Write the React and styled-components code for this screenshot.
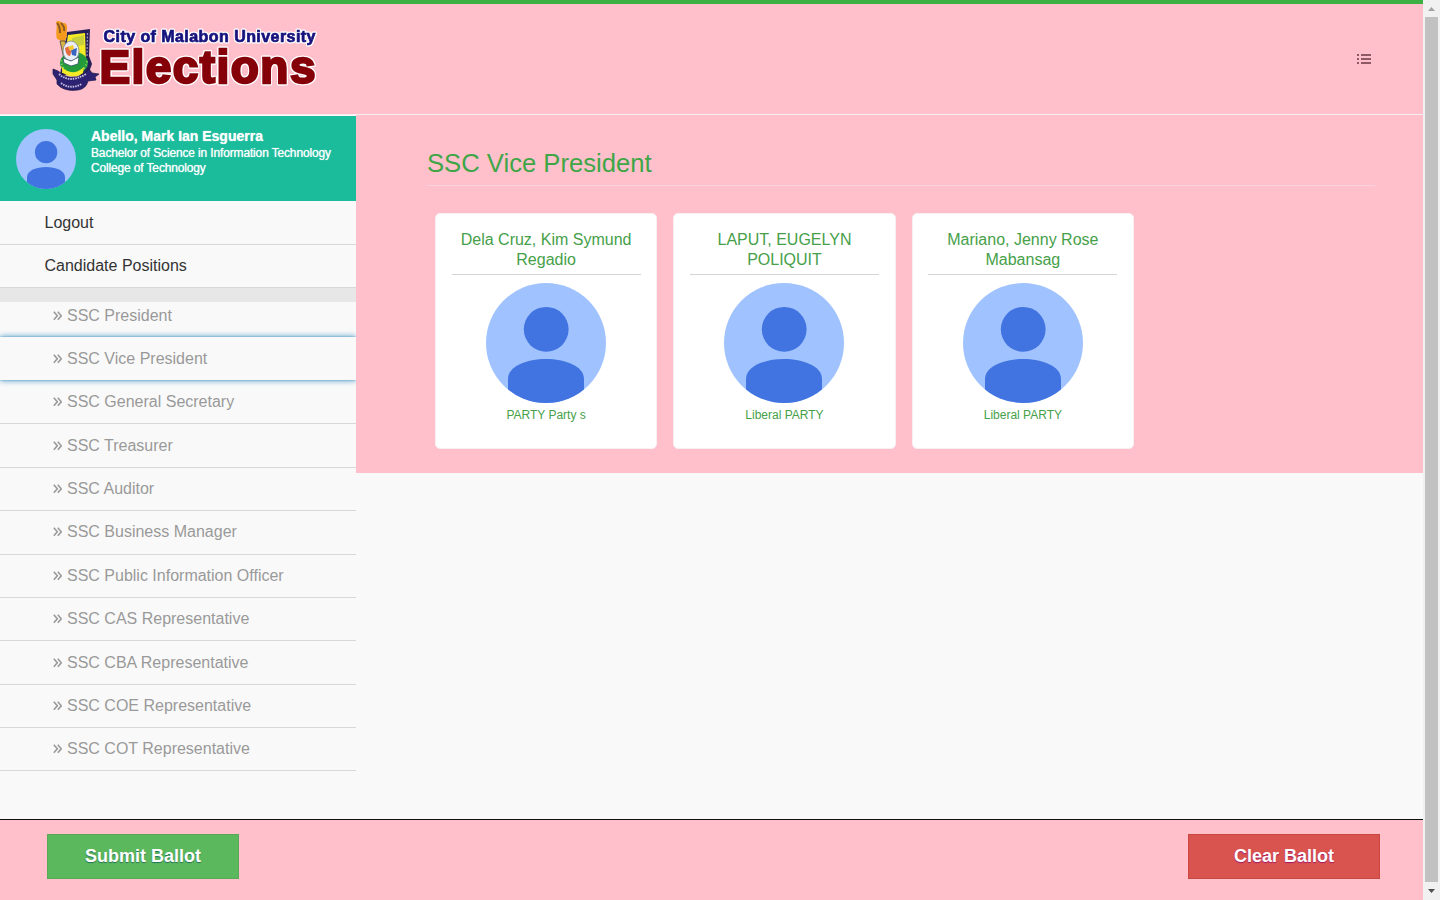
import React from 'react';
import styled, { createGlobalStyle, css } from 'styled-components';

const GlobalStyle = createGlobalStyle`
  *, *::before, *::after { box-sizing: border-box; }
  html, body { margin: 0; padding: 0; overflow: hidden; }
  body {
    font-family: "Liberation Sans", Arial, sans-serif;
    font-size: 16px;
    color: #333;
    background: #f9f9f9;
  }
`;

const Screen = styled.div`
  display: flex;
  width: 1440px;
  height: 900px;
  overflow: hidden;
`;

const Page = styled.div`
  display: flex;
  flex-direction: column;
  width: 1423px;
  height: 900px;
`;

const Header = styled.header`
  display: flex;
  align-items: flex-start;
  justify-content: space-between;
  height: 114px;
  flex: none;
  padding: 12px 52px 0 50px;
  background: #ffc0cb;
  border-top: 4px solid #3cb043;
`;

const Logo = styled.svg`
  display: block;
  width: 272px;
  height: 80px;
`;

const LogoText = styled.text`
  font-family: "Liberation Sans", Arial, sans-serif;
  font-weight: bold;
  font-size: ${(p) => p.$size}px;
  fill: ${(p) => p.$color};
  stroke: ${(p) => p.$color};
  stroke-width: ${(p) => p.$weight}px;
  filter: drop-shadow(1px 0 0 #fff) drop-shadow(-1px 0 0 #fff) drop-shadow(0 1px 0 #fff) drop-shadow(0 -1px 0 #fff);
`;

const MenuButton = styled.button`
  display: flex;
  margin: 38px 0 0;
  padding: 0;
  border: 0;
  background: none;
`;

const Body = styled.div`
  display: flex;
  align-items: flex-start;
  flex: 1;
  min-height: 0;
  border-top: 1px solid #f6eef0;
`;

const Sidebar = styled.aside`
  width: 356px;
  flex: none;
  padding-top: 1px;
  background: #f9f9f9;
`;

const Profile = styled.div`
  display: flex;
  gap: 15px;
  height: 85px;
  padding: 13px 16px;
  background: #1abc9c;
  color: #fff;
`;

const ProfileText = styled.div`
  margin-top: -1px;
  font-size: 12px;
  line-height: 15px;
  letter-spacing: -0.15px;
  white-space: nowrap;
  text-shadow: 0 0 1px rgba(255, 255, 255, 0.8);
`;

const ProfileName = styled.div`
  margin-bottom: 2px;
  font-size: 14px;
  font-weight: bold;
  line-height: 16px;
  letter-spacing: 0;
`;

const MenuRow = styled.a`
  display: flex;
  align-items: center;
  height: 43.5px;
  padding: 0.5px 0 0 44.5px;
  border-bottom: 1px solid #d8d8d8;
  color: #333;
`;

const Divider = styled.div`
  height: 14px;
  background: #e7e7e7;
`;

const PositionRow = styled.a`
  display: flex;
  align-items: center;
  gap: 5px;
  height: ${(p) => (p.$first ? '35.3px' : '43.36px')};
  padding: ${(p) => (p.$first ? '0' : '0.24px')} 0 ${(p) => (p.$first ? '7px' : '0')} 53px;
  border-bottom: 1px solid ${(p) => (p.$first ? 'transparent' : '#d8d8d8')};
  color: #999;
  ${(p) =>
    p.$active &&
    css`
      position: relative;
      height: 43.1px;
      margin-bottom: 0.7px;
      padding-top: 1px;
      border-bottom: 0;
      background: #f9f9f9;
      box-shadow: 0 0 1px #5a96bb, 0 0 6px #2a87bd;
      clip-path: inset(-8px 0 -8px 0);
    `}
`;

const Main = styled.main`
  flex: 1;
  height: 358px;
  padding: 33px 48px 0 71px;
  background: #ffc0cb;
`;

const Title = styled.h1`
  margin: 0;
  height: 38px;
  font-size: 25.64px;
  font-weight: normal;
  line-height: 30px;
  color: #3fa648;
  border-bottom: 1px solid #f8d3df;
`;

const Cards = styled.div`
  display: flex;
  gap: 16.2px;
  padding: 27px 0 0 8px;
`;

const Card = styled.article`
  display: flex;
  flex-direction: column;
  align-items: center;
  width: 222.2px;
  height: 236px;
  padding: 16px 15.5px 0;
  background: #fff;
  border: 1px solid #f7eff1;
  border-radius: 5px;
  color: #46a049;
  text-align: center;
`;

const CandidateName = styled.h2`
  width: 100%;
  height: 45px;
  margin: 0 0 8px;
  padding: 0 8px;
  border-bottom: 1px solid #d4d4d4;
  font-size: 16px;
  font-weight: normal;
  line-height: 20px;
`;

const Party = styled.div`
  margin-top: 5px;
  font-size: 12px;
  line-height: 14px;
`;

const Footer = styled.footer`
  display: flex;
  justify-content: space-between;
  height: 81px;
  flex: none;
  padding: 14px 43px 0 47px;
  background: #ffc0cb;
  border-top: 1px solid #111;
`;

const BallotButton = styled.button`
  width: 192px;
  height: 45px;
  padding: 0 0 1px;
  border: 1px solid ${(p) => (p.$danger ? '#c9483f' : '#57a957')};
  background: ${(p) => (p.$danger ? '#d9534f' : '#5cb85c')};
  color: #fff;
  font: bold 18px "Liberation Sans", Arial, sans-serif;
  text-shadow: 0 1px 1px ${(p) => (p.$danger ? '#a3166b' : '#23715a')};
`;

const Scrollbar = styled.div`
  display: flex;
  flex-direction: column;
  width: 17px;
  height: 900px;
  background: #f1f1f1;
`;

const ScrollArrow = styled.svg`
  display: block;
  width: 17px;
  height: 17px;
  flex: none;
`;

const ScrollThumb = styled.div`
  width: 13px;
  height: 865px;
  margin: 0 0 1px 2px;
  background: #c1c1c1;
`;

const AvatarSvg = styled.svg`
  flex: none;
`;

function Avatar({ size }) {
  return (
    <AvatarSvg width={size} height={size} viewBox="0 0 120 120">
      <defs>
        <clipPath id="avatar-round">
          <circle cx="60" cy="60" r="60" />
        </clipPath>
      </defs>
      <g clipPath="url(#avatar-round)">
        <rect width="120" height="120" fill="#a0c3ff" />
        <circle cx="60.2" cy="46.3" r="22.4" fill="#4274e1" />
        <path d="M22 120V96C22 83 41 76 60 76S98 83 98 96V120Z" fill="#4274e1" />
      </g>
    </AvatarSvg>
  );
}

function Chevrons() {
  return (
    <svg width="9" height="10" viewBox="0 0 9 10" fill="none" stroke="#999" strokeWidth="1.6">
      <path d="M.8 .8L4.3 4.8L.8 8.8M4.8 .8L8.3 4.8L4.8 8.8" />
    </svg>
  );
}

function ListIcon() {
  return (
    <svg width="14" height="10" viewBox="0 0 14 10" fill="#8c5965">
      <path d="M0 0h2v2H0zM4 0h10v2H4zM0 4h2v2H0zM4 4h10v2H4zM0 8h2v2H0zM4 8h10v2H4z" />
    </svg>
  );
}

function SiteLogo() {
  return (
    <Logo viewBox="0 0 272 80">
      <path d="M17 16L40 13L39 40L42 48L38 59H10Z" fill="#262057" />
      <path d="M18 19L35 17L36 46L32 57H12Z" fill="#f4ea26" />
      <path d="M22 22L34 19L34 29L22 31Z" fill="#c8cf3c" />
      <path d="M37.5 17L37 40" stroke="#9a91b8" strokeWidth="1.3" strokeDasharray="2 1.5" />
      <path d="M7 23C5 15 8 12 6 6C9 3 12 8 15 7C19 10 16 15 17 21L14 26Z" fill="#f39a1c" />
      <path d="M7 7Q10 10 10 17M11 7Q15 11 14 15" fill="none" stroke="#8b5a24" strokeWidth="2" />
      <path d="M10 25H15L19 43H14Z" fill="#d8b54b" stroke="#333" strokeWidth=".7" />
      <ellipse cx="24" cy="47" rx="14" ry="11" fill="#239b3a" />
      <path d="M11 44Q13 58 24 57Q35 56 37 45" fill="none" stroke="#76c45b" strokeWidth="2" strokeDasharray="1.5 2" />
      <ellipse cx="21" cy="35" rx="8" ry="10" fill="#e9edf5" stroke="#7d8599" strokeWidth=".8" />
      <path d="M15 32Q20 28 22 34L20 40Q16 40 15 32Z" fill="#e56a42" />
      <path d="M21 34L27 32L26 40L22 39Z" fill="#3765c0" />
      <path d="M18 31L23 29L24 33L20 35Z" fill="#f5c935" />
      <path d="M13 42L21 45L29 41L28 48L21 50L14 47Z" fill="#fff" stroke="#315263" strokeWidth=".8" />
      <path d="M11 50Q22 62 34 51L33 57Q24 64 13 57Z" fill="#f4ea26" />
      <path
        d="M3 53L8 55Q19 66 34 58L39 53L42 57L49 58L45 61L46 64L38 65Q36 73 28 74Q14 76 7 68L7 64L3 58Z"
        fill="#2d2172"
        stroke="#191446"
        strokeWidth=".7"
      />
      <path d="M9 58Q20 68 36 58M11 67Q20 74 32 68" fill="none" stroke="#c6bddd" strokeWidth="1.8" strokeDasharray="1.6 .9" />
      <LogoText x="53.5" y="26.4" textLength="212" lengthAdjust="spacing" $size={16} $weight={0.7} $color="#17127d">
        City of Malabon University
      </LogoText>
      <LogoText x="49.5" y="67" textLength="216" lengthAdjust="spacing" $size={46} $weight={2.4} $color="#850008">
        Elections
      </LogoText>
    </Logo>
  );
}

const positions = [
  'SSC President',
  'SSC Vice President',
  'SSC General Secretary',
  'SSC Treasurer',
  'SSC Auditor',
  'SSC Business Manager',
  'SSC Public Information Officer',
  'SSC CAS Representative',
  'SSC CBA Representative',
  'SSC COE Representative',
  'SSC COT Representative',
];

const candidates = [
  { name: 'Dela Cruz, Kim Symund Regadio', party: 'PARTY Party s' },
  { name: 'LAPUT, EUGELYN POLIQUIT', party: 'Liberal PARTY' },
  { name: 'Mariano, Jenny Rose Mabansag', party: 'Liberal PARTY' },
];

export default function App() {
  return (
    <>
      <GlobalStyle />
      <Screen>
        <Page>
          <Header>
            <SiteLogo />
            <MenuButton aria-label="Menu">
              <ListIcon />
            </MenuButton>
          </Header>
          <Body>
            <Sidebar>
              <Profile>
                <Avatar size={60} />
                <ProfileText>
                  <ProfileName>Abello, Mark Ian Esguerra</ProfileName>
                  <div>Bachelor of Science in Information Technology</div>
                  <div>College of Technology</div>
                </ProfileText>
              </Profile>
              <MenuRow>Logout</MenuRow>
              <MenuRow>Candidate Positions</MenuRow>
              <Divider />
              {positions.map((name, i) => (
                <PositionRow key={name} $first={i === 0} $active={i === 1}>
                  <Chevrons />
                  {name}
                </PositionRow>
              ))}
            </Sidebar>
            <Main>
              <Title>SSC Vice President</Title>
              <Cards>
                {candidates.map((c) => (
                  <Card key={c.name}>
                    <CandidateName>{c.name}</CandidateName>
                    <Avatar size={120} />
                    <Party>{c.party}</Party>
                  </Card>
                ))}
              </Cards>
            </Main>
          </Body>
          <Footer>
            <BallotButton>Submit Ballot</BallotButton>
            <BallotButton $danger>Clear Ballot</BallotButton>
          </Footer>
        </Page>
        <Scrollbar>
          <ScrollArrow viewBox="0 0 17 17">
            <path d="M5 11L8.5 7L12 11Z" fill="#a3a3a3" />
          </ScrollArrow>
          <ScrollThumb />
          <ScrollArrow viewBox="0 0 17 17">
            <path d="M5 6L8.5 10L12 6Z" fill="#505050" />
          </ScrollArrow>
        </Scrollbar>
      </Screen>
    </>
  );
}
